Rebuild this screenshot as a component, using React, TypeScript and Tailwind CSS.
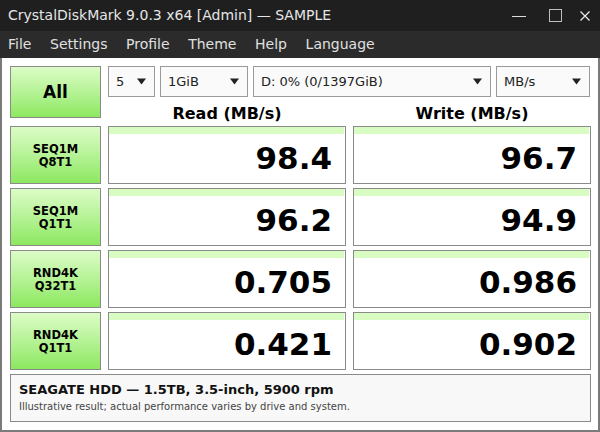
import React from 'react';

const rows = [
  { l1: 'SEQ1M', l2: 'Q8T1', read: '98.4', write: '96.7' },
  { l1: 'SEQ1M', l2: 'Q1T1', read: '96.2', write: '94.9' },
  { l1: 'RND4K', l2: 'Q32T1', read: '0.705', write: '0.986' },
  { l1: 'RND4K', l2: 'Q1T1', read: '0.421', write: '0.902' },
];

const menu = ['File', 'Settings', 'Profile', 'Theme', 'Help', 'Language'];

const Arrow = () => (
  <svg width="9" height="7" viewBox="0 0 9 7" className="shrink-0">
    <path d="M0 0.5 H9 L4.5 6.5 Z" fill="#222" />
  </svg>
);

const Select = ({ label, w }: { label: string; w: string }) => (
  <div className={`${w} h-full flex items-center justify-between border border-[#9a9a9a] bg-[#fafafa] pl-[7px] pr-[8px] text-[13px] text-[#222]`}>
    <span>{label}</span>
    <Arrow />
  </div>
);

const ValueBox = ({ value }: { value: string }) => (
  <div className="w-[238px] h-full flex flex-col border border-[#8a8a8a] bg-white">
    <div className="h-[7px] bg-[#d8fcc2] mr-[1px]" />
    <div className="flex-1 flex items-center justify-end pr-[13px] text-[31px] font-bold text-black leading-none">
      {value}
    </div>
  </div>
);

const GreenButton = ({ children, h }: { children: React.ReactNode; h: string }) => (
  <div className={`w-[91px] ${h} flex flex-col items-center justify-center pt-[2px] border border-[#8a8a8a] bg-gradient-to-b from-[#dcfcc6] to-[#8ce85e] font-bold text-black`}>
    {children}
  </div>
);

export default function App() {
  return (
    <div className="w-[600px] h-[432px] flex flex-col font-['DejaVu_Sans',sans-serif] overflow-hidden">
      {/* title bar */}
      <div className="h-[31px] bg-[#1f1f1f] flex items-center pl-2 text-[14px] text-[#e6e6e6]">
        <span className="flex-1">CrystalDiskMark 9.0.3 x64 [Admin] — SAMPLE</span>
        <div className="flex items-center">
          <svg width="14" height="14" viewBox="0 0 14 14" className="mr-[23px]">
            <path d="M0 7.5 H14" stroke="#dcdcdc" strokeWidth="1" />
          </svg>
          <svg width="13" height="13" viewBox="0 0 13 13" className="mr-[18px]">
            <rect x="0.5" y="0.5" width="12" height="12" fill="none" stroke="#bdbdbd" strokeWidth="1" />
          </svg>
          <svg width="10" height="10" viewBox="0 0 10 10" className="mr-[10px]">
            <path d="M0.5 0.5 L9.5 9.5 M9.5 0.5 L0.5 9.5" stroke="#e6e6e6" strokeWidth="1.3" />
          </svg>
        </div>
      </div>
      {/* menu bar */}
      <div className="h-[27px] bg-[#2b2b2b] flex items-center gap-[18.6px] pl-2 text-[14px] text-[#e0e0e0]">
        {menu.map((m) => (
          <span key={m}>{m}</span>
        ))}
      </div>
      {/* content */}
      <div className="flex-1 flex flex-col gap-[4px] bg-white border-x-2 border-b-2 border-[#7b7b7b] pt-2 pl-2 pr-[7px] pb-2">
        <div className="h-[56px] shrink-0 flex gap-[7px]">
          <GreenButton h="h-[52px]">
            <span className="text-[17px]">All</span>
          </GreenButton>
          <div className="flex-1 flex flex-col">
            <div className="h-[31px] shrink-0 flex gap-[5px]">
              <Select label="5" w="w-[47px]" />
              <Select label="1GiB" w="w-[88px]" />
              <Select label="D: 0% (0/1397GiB)" w="w-[238px]" />
              <Select label="MB/s" w="w-[94px]" />
            </div>
            <div className="flex gap-[7px] pt-[8px] text-[16px] leading-[17px] font-bold text-black">
              <div className="w-[238px] text-center">Read (MB/s)</div>
              <div className="w-[238px] text-center">Write (MB/s)</div>
            </div>
          </div>
        </div>
        {rows.map((r, i) => (
          <div key={i} className="h-[58px] shrink-0 flex gap-[7px]">
            <GreenButton h="h-full">
              <span className="text-[11.5px] leading-[13px]">{r.l1}</span>
              <span className="text-[11.5px] leading-[13px]">{r.l2}</span>
            </GreenButton>
            <ValueBox value={r.read} />
            <ValueBox value={r.write} />
          </div>
        ))}
        <div className="h-[48px] shrink-0 flex flex-col justify-center border border-[#8a8a8a] bg-[#f8f8f8] pl-[8px]">
          <div className="text-[13px] font-bold text-[#111] leading-[18px]">SEAGATE HDD — 1.5TB, 3.5-inch, 5900 rpm</div>
          <div className="text-[10px] text-[#444] leading-[16px]">Illustrative result; actual performance varies by drive and system.</div>
        </div>
      </div>
    </div>
  );
}
